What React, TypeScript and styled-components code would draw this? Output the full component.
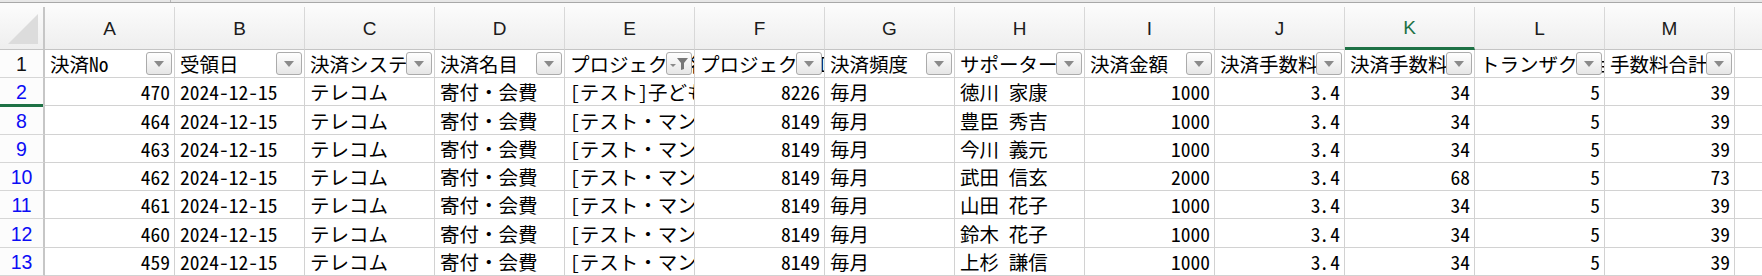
import React from 'react';
import styled, { createGlobalStyle } from 'styled-components';

const GlobalStyle = createGlobalStyle`
  html, body {
    margin: 0;
    padding: 0;
    background: #fff;
  }
  body {
    width: 1762px;
    height: 276px;
    overflow: hidden;
  }
`;

const COLS = 'ABCDEFGHIJKLM'.split('');
const TEMPLATE = '45px repeat(13, 130px) 1fr';
// columns holding numbers are right aligned like Excel does
const RIGHT = [true, false, false, false, false, true, false, false, true, true, true, true, true];

const HEADERS = [
  '決済No',
  '受領日',
  '決済システム',
  '決済名目',
  'プロジェクト名',
  'プロジェクトID',
  '決済頻度',
  'サポーター名',
  '決済金額',
  '決済手数料率',
  '決済手数料',
  'トランザクション手数料',
  '手数料合計',
];

const base = (no: string, name: string, amount = '1000', fee = '34', total = '39') => [
  no,
  '2024-12-15',
  'テレコム',
  '寄付・会費',
  '[テスト・マンスリーサポーター]',
  '8149',
  '毎月',
  name,
  amount,
  '3.4',
  fee,
  '5',
  total,
];

const first = base('470', '徳川 家康');
first[4] = '[テスト]子ども食堂支援';
first[5] = '8226';

const ROWS = [
  { n: 2, h: 28, mark: true, cells: first },
  { n: 8, h: 29, cells: base('464', '豊臣 秀吉') },
  { n: 9, h: 28, cells: base('463', '今川 義元') },
  { n: 10, h: 28, cells: base('462', '武田 信玄', '2000', '68', '73') },
  { n: 11, h: 28, cells: base('461', '山田 花子') },
  { n: 12, h: 29, cells: base('460', '鈴木 花子') },
  { n: 13, h: 28, cells: base('459', '上杉 謙信') },
];

const Sheet = styled.div`
  width: 1762px;
  height: 276px;
  overflow: hidden;
  background: #fff;
`;

const TopBar = styled.div`
  display: flex;
  height: 7px;
  background: linear-gradient(#e7e7e7 0 2px, #a8a8a8 2px 3px, #fbfbfb 3px);
`;

const NameBox = styled.div`
  width: 170px;
  height: 2px;
  border-right: 1px solid #b8b8b8;
`;

const HeadRow = styled.div`
  display: grid;
  grid-template-columns: ${TEMPLATE};
  height: 43px;
  background: linear-gradient(#fbfbfb, #eeeeee);
`;

const Corner = styled.div`
  display: flex;
  align-items: flex-end;
  justify-content: flex-end;
  padding: 0 5px 5px 0;
  border-right: 2px solid #c6c6c6;
  border-bottom: 1px solid #c4c4c4;
  box-sizing: border-box;
`;

const ColHead = styled.div<{ $active?: boolean }>`
  display: flex;
  align-items: center;
  justify-content: center;
  padding-top: 2px;
  box-sizing: border-box;
  font-family: 'Liberation Sans', Arial, sans-serif;
  font-size: 19px;
  color: ${(p) => (p.$active ? '#1e7145' : '#1c1c1c')};
  border-right: 1px solid #d8d8d8;
  border-bottom: ${(p) => (p.$active ? '3px solid #1e7145' : '1px solid #c4c4c4')};
`;

const Row = styled.div<{ $h: number }>`
  display: grid;
  grid-template-columns: ${TEMPLATE};
  height: ${(p) => p.$h}px;
`;

const RowHead = styled.div<{ $filtered?: boolean; $mark?: boolean }>`
  position: relative;
  display: flex;
  align-items: center;
  justify-content: center;
  padding-top: 3px;
  box-sizing: border-box;
  font-family: 'Liberation Sans', Arial, sans-serif;
  font-size: 19.5px;
  line-height: 1;
  color: ${(p) => (p.$filtered ? '#0c0cf5' : '#111')};
  background: #fcfcfc;
  border-right: 2px solid #c6c6c6;
  border-bottom: 1px solid #d6d6d6;

  &::after {
    content: '';
    display: ${(p) => (p.$mark ? 'block' : 'none')};
    position: absolute;
    left: 0;
    right: 0;
    bottom: -2px;
    height: 3px;
    background: #1e7145;
    z-index: 2;
  }
`;

const Cell = styled.div<{ $right?: boolean }>`
  position: relative;
  display: flex;
  align-items: center;
  justify-content: ${(p) => (p.$right ? 'flex-end' : 'flex-start')};
  padding: 1px 4px 0 5px;
  box-sizing: border-box;
  overflow: hidden;
  white-space: nowrap;
  font-family: 'Noto Sans CJK JP', sans-serif;
  font-feature-settings: 'hwid' 1;
  font-size: 19.5px;
  line-height: 1;
  color: #000;
  border-right: 1px solid #d2d2d2;
  border-bottom: 1px solid #d2d2d2;
`;

const Value = styled.span`
  display: block;
  white-space: nowrap;
`;

// the sheet font is fixed-pitch, so the decimal point takes a full digit slot
const Dot = styled.span`
  display: inline-block;
  width: 9.75px;
  padding-left: 1px;
  box-sizing: border-box;
  font-feature-settings: normal;
`;

const Filler = styled.div`
  border-bottom: 1px solid #d2d2d2;
`;

const HeadFiller = styled.div`
  border-bottom: 1px solid #c4c4c4;
`;

const FilterButton = styled.div`
  position: absolute;
  top: 2px;
  right: 2px;
  width: 26px;
  height: 23px;
  box-sizing: border-box;
  display: flex;
  align-items: center;
  justify-content: center;
  border: 1px solid #ababab;
  border-radius: 3px;
  background: linear-gradient(#fefefe, #e6e6e6);
`;

const CornerMark = () => (
  <svg width="30" height="30" viewBox="0 0 30 30">
    <polygon points="30,0 30,30 0,30" fill="#dcdcdc" />
  </svg>
);

const Arrow = () => (
  <svg width="12" height="8" viewBox="0 0 12 8">
    <polygon points="1,1 11,1 6,7" fill="#8a8a8a" />
  </svg>
);

const Funnel = () => (
  <svg width="20" height="16" viewBox="0 0 20 16">
    <polygon points="1,8 7,8 4,11" fill="#8a8a8a" />
    <path d="M8 2 H19 L15 7 V13 L12 14 V7 Z" fill="#777" />
  </svg>
);

const renderValue = (v: string) => {
  const i = v.indexOf('.');
  if (i < 0 || !/^\d/.test(v)) return <Value>{v}</Value>;
  return (
    <Value>
      {v.slice(0, i)}
      <Dot>.</Dot>
      {v.slice(i + 1)}
    </Value>
  );
};

export default function App() {
  return (
    <Sheet>
      <GlobalStyle />
      <TopBar>
        <NameBox />
      </TopBar>
      <HeadRow>
        <Corner>
          <CornerMark />
        </Corner>
        {COLS.map((c) => (
          <ColHead key={c} $active={c === 'K'}>
            {c}
          </ColHead>
        ))}
        <HeadFiller />
      </HeadRow>
      <Row $h={28}>
        <RowHead>1</RowHead>
        {HEADERS.map((h, i) => (
          <Cell key={h}>
            <Value>{h}</Value>
            <FilterButton>{i === 4 ? <Funnel /> : <Arrow />}</FilterButton>
          </Cell>
        ))}
        <Filler />
      </Row>
      {ROWS.map((r) => (
        <Row key={r.n} $h={r.h}>
          <RowHead $filtered $mark={r.mark}>
            {r.n}
          </RowHead>
          {r.cells.map((v, i) => (
            <Cell key={i} $right={RIGHT[i]}>
              {renderValue(v)}
            </Cell>
          ))}
          <Filler />
        </Row>
      ))}
    </Sheet>
  );
}
